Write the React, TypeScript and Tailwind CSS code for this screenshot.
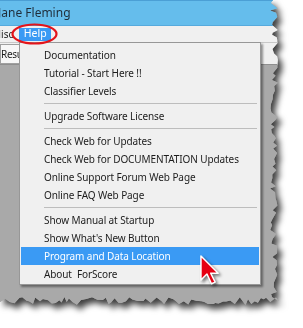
import React from "react";

// deterministic jagged "torn paper" outline
function makeTornEdge() {
  let s = 12345;
  const r = () => {
    s = (s * 16807) % 2147483647;
    return s / 2147483647;
  };
  const pts: string[] = ["0px 0px", "273px 0px"];
  for (let y = 3; y < 298; y += 2 + r() * 4) {
    pts.push(`${(270 + r() * 8).toFixed(1)}px ${y.toFixed(1)}px`);
  }
  pts.push("279px 301px");
  for (let x = 276; x > 2; x -= 2 + r() * 4) {
    pts.push(`${x.toFixed(1)}px ${(297 + r() * 8).toFixed(1)}px`);
  }
  pts.push("0px 302px");
  return `polygon(${pts.join(",")})`;
}

const clip = makeTornEdge();

type Entry = { label: string; active?: boolean } | "sep";

const entries: Entry[] = [
  { label: "Documentation" },
  { label: "Tutorial - Start Here !!" },
  { label: "Classifier Levels" },
  "sep",
  { label: "Upgrade Software License" },
  "sep",
  { label: "Check Web for Updates" },
  { label: "Check Web for DOCUMENTATION Updates" },
  { label: "Online Support Forum Web Page" },
  { label: "Online FAQ Web Page" },
  "sep",
  { label: "Show Manual at Startup" },
  { label: "Show What's New Button" },
  { label: "Program and Data Location", active: true },
  { label: "About  ForScore" },
];

function HelpMenu() {
  return (
    <div className="absolute left-[19px] top-[42px] w-[242px] border border-[#979797] bg-[#f0f0f0] px-[1px] pt-[3px] pb-[1px] shadow-[2px_2px_2px_rgba(0,0,0,0.4)]">
      {entries.map((e, i) =>
        e === "sep" ? (
          <div key={i} className="h-[7px] flex items-center pl-[23px] pr-[2px]">
            <div className="h-px w-full bg-[#bdbdbd]" />
          </div>
        ) : (
          <div
            key={i}
            className={
              "h-[18px] flex items-center pl-[23px] whitespace-pre tracking-[-0.1px] " +
              (e.active ? "bg-[#3a9af4] text-white" : "text-[#1c1c1c]")
            }
          >
            {e.label}
          </div>
        )
      )}
    </div>
  );
}

export default function App() {
  return (
    <div className="relative w-[303px] h-[328px] bg-white overflow-hidden font-['Noto_Sans',sans-serif] text-[10px]">
      <div className="[filter:drop-shadow(4px_5px_3px_rgba(0,0,0,0.75))]">
        <div className="relative w-[290px] h-[315px] bg-[#a9a9a9] flex flex-col" style={{ clipPath: clip }}>
          {/* title bar */}
          <div className="h-[26px] bg-[#65bdec] border-t border-t-[#4b9fd5] border-b border-b-[#56aadd] flex items-center">
            <span className="ml-[-2px] text-[12px] text-[#1f2d3a]">Jane Fleming</span>
          </div>
          {/* menu bar */}
          <div className="h-[16px] bg-[#f0f0f0] flex items-center">
            <span className="ml-[-8px] text-[#1c1c1c]">Misc</span>
            <span className="ml-[6px] h-[13px] w-[32px] bg-[#3a9af4] text-white text-[10.5px] flex items-center justify-center">
              Help
            </span>
          </div>
          {/* tab strip */}
          <div className="h-[23px] bg-[#f0f0f0] border-t border-[#c8c8c8] border-b border-b-[#8f8f8f] flex items-end">
            <div className="h-[20px] w-[20px] border border-[#a0a0a0] bg-[#f7f7f7] flex items-center overflow-hidden">
              <span className="text-[#1c1c1c] tracking-[-0.3px]">Results</span>
            </div>
          </div>
          <div className="flex-1 bg-[#a9a9a9]" />
          <HelpMenu />
        </div>
      </div>

      {/* red annotation ellipse */}
      <svg className="absolute left-[10px] top-[22px]" width="50" height="24" viewBox="0 0 50 24">
        <ellipse cx="24.5" cy="12" rx="22" ry="9.5" fill="none" stroke="#e3141b" strokeWidth="2.2" />
      </svg>

      {/* mouse cursor */}
      <svg
        className="absolute left-[199px] top-[254px] [filter:drop-shadow(2px_2px_1.5px_rgba(0,0,0,0.5))]"
        width="24"
        height="34"
        viewBox="-1.3 -1.3 16 22.6"
      >
        <polygon
          points="0,0 0,16 4,12 7,18.5 9.5,17.4 6.5,11.5 11.5,11.5"
          fill="#e60012"
          stroke="#ffffff"
          strokeWidth="1"
          strokeLinejoin="round"
        />
      </svg>
    </div>
  );
}
